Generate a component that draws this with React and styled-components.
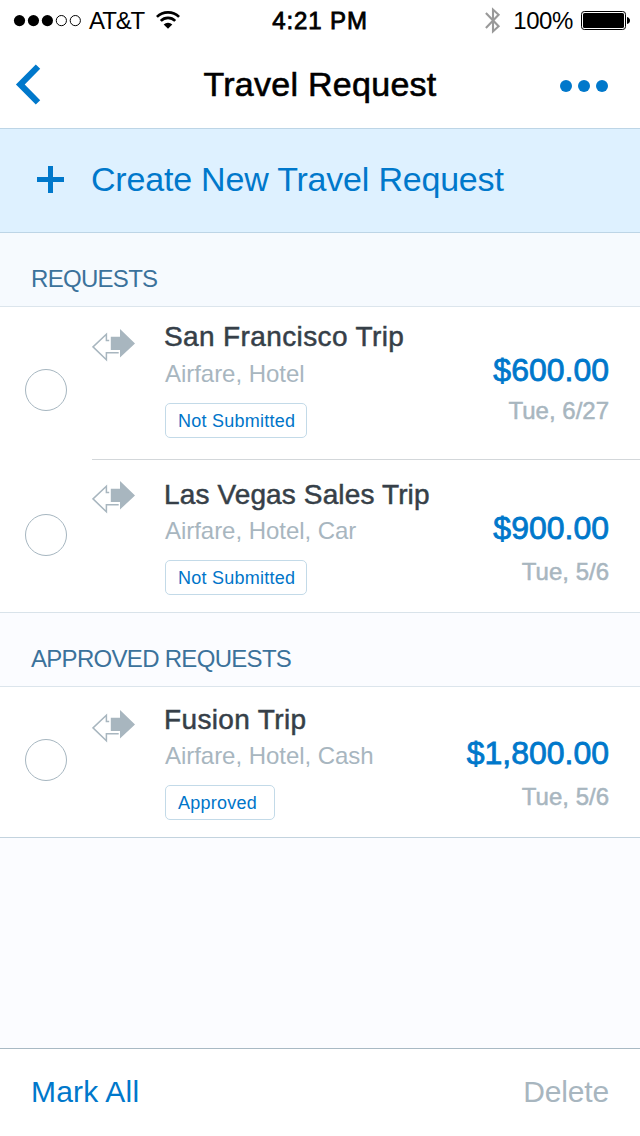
import React from 'react';
import styled, { createGlobalStyle } from 'styled-components';

const GlobalStyle = createGlobalStyle`
  * { box-sizing: border-box; }
  body {
    margin: 0;
    background: #fff;
    font-family: "Liberation Sans", Arial, Helvetica, sans-serif;
  }
`;

const Screen = styled.div`
  width: 640px;
  height: 1136px;
  display: flex;
  flex-direction: column;
  background: #fbfcff;
  overflow: hidden;
`;

const StatusBar = styled.div`
  height: 40px;
  display: grid;
  grid-template-columns: 1fr auto 1fr;
  background: #fff;
  color: #000;
  font-size: 24px;
  line-height: 41px;
  white-space: nowrap;
`;

const StatusSide = styled.div`
  display: flex;
  align-items: flex-start;
  justify-content: ${(p) => (p.$end ? 'flex-end' : 'flex-start')};
  padding: ${(p) => (p.$end ? '0 10px 0 0' : '0 0 0 13px')};
  svg { display: block; flex: none; }
`;

const Carrier = styled.span`
  margin: 0 12px 0 7px;
  letter-spacing: -1.1px;
`;

const Clock = styled.span`
  letter-spacing: 0.9px;
  -webkit-text-stroke: 0.8px #000;
`;

const Percent = styled.span`
  margin: 0 8px 0 12px;
  letter-spacing: -0.4px;
`;

const Header = styled.header`
  height: 88px;
  display: grid;
  grid-template-columns: 100px 1fr 100px;
  align-items: center;
  background: #fff;
`;

const Title = styled.h1`
  margin: 0;
  text-align: center;
  font-size: 34px;
  line-height: 40px;
  font-weight: 400;
  letter-spacing: 0.28px;
  color: #000;
  -webkit-text-stroke: 0.6px #000;
`;

const IconButton = styled.button`
  display: flex;
  justify-content: ${(p) => (p.$end ? 'flex-end' : 'flex-start')};
  padding: ${(p) => (p.$end ? '4px 32px 0 0' : '1px 0 0 15px')};
  border: 0;
  background: none;
`;

const CreateBar = styled.button`
  height: 105px;
  display: flex;
  align-items: center;
  padding: 0 0 2px 37px;
  gap: 27px;
  border: 0;
  border-top: 1px solid #bdd5e6;
  border-bottom: 1px solid #bdd5e6;
  background: #def1ff;
  color: #0078cb;
  font-family: inherit;
  font-size: 34px;
  letter-spacing: -0.2px;
`;

const SectionHeader = styled.h2`
  margin: 0;
  height: 74px;
  padding: 28px 0 0 31px;
  border-bottom: 1px solid #dce5ec;
  background: ${(p) => p.$bg};
  color: #3b729b;
  font-size: 24px;
  line-height: 36px;
  font-weight: 400;
  letter-spacing: -0.7px;
`;

const TripRow = styled.div`
  height: ${(p) => p.$height}px;
  display: grid;
  grid-template-columns: 92px 1fr;
  background: #fff;
  border-bottom: ${(p) => (p.$edge ? `1px solid ${p.$edge}` : '0')};
`;

const RowContent = styled.div`
  display: grid;
  grid-template-columns: 72px 1fr auto;
  padding-right: 31px;
  border-bottom: ${(p) => (p.$divided ? '1px solid #d3d7da' : '0')};
`;

const Radio = styled.span`
  width: 42px;
  height: 42px;
  margin: ${(p) => p.$top}px 0 0 25px;
  border: 1px solid #a6b6c0;
  border-radius: 50%;
`;

const IconSlot = styled.div`
  padding-top: ${(p) => p.$top}px;
  svg { display: block; }
`;

const Details = styled.div`
  padding-top: ${(p) => p.$top}px;
`;

const TripName = styled.div`
  font-size: 28px;
  line-height: 34px;
  letter-spacing: ${(p) => p.$spacing}px;
  color: #363f48;
  -webkit-text-stroke: 0.5px #363f48;
`;

const TripParts = styled.div`
  margin: ${(p) => p.$gap}px 0 14px 1px;
  font-size: 24px;
  line-height: 30px;
  letter-spacing: -0.04px;
  color: #a8b6bf;
`;

const Badge = styled.span`
  display: block;
  width: ${(p) => p.$width}px;
  height: 35px;
  margin-left: 1px;
  padding-left: 12px;
  border: 1px solid #c3dae8;
  border-radius: 5px;
  color: #0075c9;
  font-size: 18px;
  line-height: 35px;
  letter-spacing: 0.25px;
`;

const Cost = styled.div`
  padding-top: ${(p) => p.$top}px;
  text-align: right;
`;

const Amount = styled.div`
  font-size: 32px;
  line-height: 40px;
  color: #0078cb;
  -webkit-text-stroke: 0.8px #0078cb;
`;

const TripDate = styled.div`
  margin-top: ${(p) => p.$gap}px;
  font-size: 24px;
  line-height: 30px;
  color: #a8b6bf;
  -webkit-text-stroke: 0.5px #a8b6bf;
`;

const BottomBar = styled.footer`
  height: 88px;
  margin-top: auto;
  padding: 0 31px 2px;
  display: flex;
  align-items: center;
  justify-content: space-between;
  border-top: 1px solid #a8b9c4;
  background: #fff;
`;

const BarAction = styled.button`
  padding: 0;
  border: 0;
  background: none;
  font-family: inherit;
  font-size: 30px;
  line-height: 36px;
  letter-spacing: ${(p) => (p.$muted ? '-0.15px' : '0.2px')};
  color: ${(p) => (p.$muted ? '#a8b6bf' : '#0078cb')};
`;

const SignalDots = () => (
  <svg width="69" height="40" viewBox="0 0 69 40">
    {[0, 1, 2, 3, 4].map((i) => (
      <circle
        key={i}
        cx={6.5 + i * 13.95}
        cy="20.6"
        r={i < 3 ? 5.6 : 5.1}
        fill={i < 3 ? '#000' : 'none'}
        stroke={i < 3 ? 'none' : '#000'}
        strokeWidth="1"
      />
    ))}
  </svg>
);

const Wifi = () => (
  <svg width="24" height="40" viewBox="0 0 24 40" fill="none" stroke="#000" strokeWidth="2.7">
    <path d="M0.9 16.9 A15.8 15.8 0 0 1 23.1 16.9" />
    <path d="M4.8 20.9 A10.2 10.2 0 0 1 19.2 20.9" />
    <path d="M12 28.8 L7.7 24.5 A6.1 6.1 0 0 1 16.3 24.5 Z" fill="#000" stroke="none" />
  </svg>
);

const Bluetooth = () => (
  <svg width="16" height="40" viewBox="0 0 16 40" fill="none" stroke="#999" strokeWidth="2.1">
    <path d="M0.9 13 L13.6 26.2 L8 31.4 V9.6 L13.6 14.8 L0.9 28" />
  </svg>
);

const Battery = () => (
  <svg width="49" height="40" viewBox="0 0 49 40">
    <rect x="0.5" y="11.5" width="44" height="18" rx="2.8" fill="none" stroke="#000" />
    <rect x="2" y="13" width="41" height="15" rx="1.6" />
    <path d="M46 17 Q49 18 49 20.5 T46 24 Z" />
  </svg>
);

const BackChevron = () => (
  <svg width="26" height="42" viewBox="0 0 26 42" fill="none" stroke="#0078cb" strokeWidth="6.2">
    <path d="M23 2.6 L5.3 20.5 L23 38.4" />
  </svg>
);

const MoreDots = () => (
  <svg width="48" height="12" viewBox="0 0 48 12" fill="#0078cb">
    <circle cx="6" cy="6" r="6" />
    <circle cx="24" cy="6" r="6" />
    <circle cx="42" cy="6" r="6" />
  </svg>
);

const Plus = () => (
  <svg width="27" height="27" viewBox="0 0 27 27" fill="#0078cb">
    <path d="M11 0h5v11h11v5H16v11h-5V16H0v-5h11z" />
  </svg>
);

const TripArrows = () => (
  <svg width="44" height="33" viewBox="0 0 44 33">
    <path
      d="M17.2 11.4 H14.4 V5.2 L1 17.9 L14.4 30.8 V23.7 H26.7"
      fill="none"
      stroke="#a8b6bf"
      strokeWidth="1.5"
    />
    <path d="M18.8 7.7 H28 V0 L43 14.4 L28 28.6 V21 H18.8 Z" fill="#a8b6bf" />
  </svg>
);

const sections = [
  {
    name: 'REQUESTS',
    bg: '#f6fafe',
    trips: [
      {
        name: 'San Francisco Trip', parts: 'Airfare, Hotel', status: 'Not Submitted', badge: 142,
        amount: '$600.00', date: 'Tue, 6/27', height: 153, divided: true, spacing: 0.38,
        radioTop: 62, iconTop: 22, nameTop: 13, partsGap: 5, costTop: 43, dateGap: 6,
      },
      {
        name: 'Las Vegas Sales Trip', parts: 'Airfare, Hotel, Car', status: 'Not Submitted', badge: 142,
        amount: '$900.00', date: 'Tue, 5/6', height: 153, edge: '#d9e3ea', spacing: 0.13,
        radioTop: 54, iconTop: 21, nameTop: 18, partsGap: 4, costTop: 48, dateGap: 9,
      },
    ],
  },
  {
    name: 'APPROVED REQUESTS',
    bg: '#fbfcff',
    trips: [
      {
        name: 'Fusion Trip', parts: 'Airfare, Hotel, Cash', status: 'Approved', badge: 110,
        amount: '$1,800.00', date: 'Tue, 5/6', height: 151, edge: '#c3d3de', spacing: 0.36,
        radioTop: 52, iconTop: 23, nameTop: 16, partsGap: 4, costTop: 46, dateGap: 9,
      },
    ],
  },
];

const Trip = ({ trip }) => (
  <TripRow $height={trip.height} $edge={trip.edge}>
    <Radio $top={trip.radioTop} />
    <RowContent $divided={trip.divided}>
      <IconSlot $top={trip.iconTop}><TripArrows /></IconSlot>
      <Details $top={trip.nameTop}>
        <TripName $spacing={trip.spacing}>{trip.name}</TripName>
        <TripParts $gap={trip.partsGap}>{trip.parts}</TripParts>
        <Badge $width={trip.badge}>{trip.status}</Badge>
      </Details>
      <Cost $top={trip.costTop}>
        <Amount>{trip.amount}</Amount>
        <TripDate $gap={trip.dateGap}>{trip.date}</TripDate>
      </Cost>
    </RowContent>
  </TripRow>
);

export default function App() {
  return (
    <>
      <GlobalStyle />
      <Screen>
        <StatusBar>
          <StatusSide>
            <SignalDots />
            <Carrier>AT&amp;T</Carrier>
            <Wifi />
          </StatusSide>
          <Clock>4:21 PM</Clock>
          <StatusSide $end>
            <Bluetooth />
            <Percent>100%</Percent>
            <Battery />
          </StatusSide>
        </StatusBar>
        <Header>
          <IconButton aria-label="Back"><BackChevron /></IconButton>
          <Title>Travel Request</Title>
          <IconButton $end aria-label="More"><MoreDots /></IconButton>
        </Header>
        <CreateBar>
          <Plus />
          <span>Create New Travel Request</span>
        </CreateBar>
        {sections.map((section) => (
          <React.Fragment key={section.name}>
            <SectionHeader $bg={section.bg}>{section.name}</SectionHeader>
            {section.trips.map((trip) => <Trip key={trip.name} trip={trip} />)}
          </React.Fragment>
        ))}
        <BottomBar>
          <BarAction>Mark All</BarAction>
          <BarAction $muted>Delete</BarAction>
        </BottomBar>
      </Screen>
    </>
  );
}
